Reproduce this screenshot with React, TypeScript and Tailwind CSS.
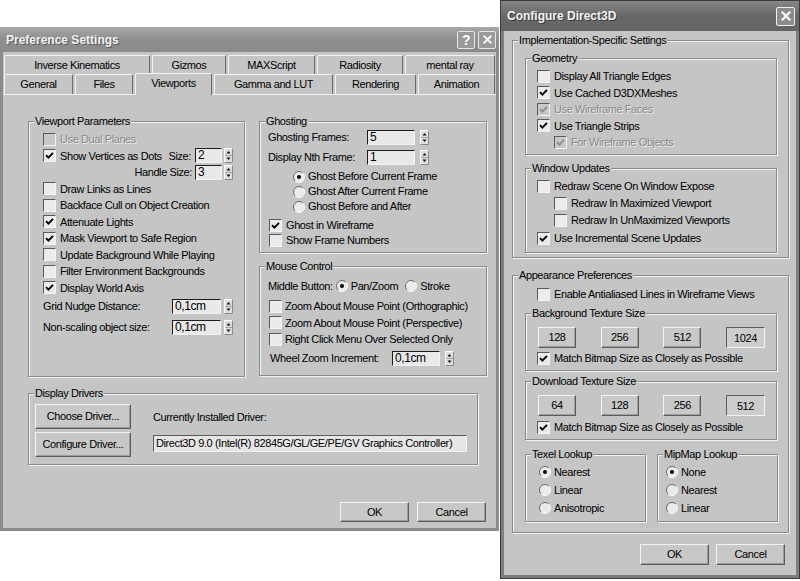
import React from "react";

const BG = "bg-[#c5c5c5]";

function Check({ on = false, dis = false }: { on?: boolean; dis?: boolean }) {
  return (
    <span
      className={
        "flex h-[13px] w-[13px] shrink-0 items-center justify-center border border-b-[#f4f4f4] border-l-[#5a5a5a] border-r-[#f4f4f4] border-t-[#5a5a5a] " +
        (dis ? "bg-[#c8c8c8]" : "bg-[#ebebeb]")
      }
    >
      {on && (
        <svg width="9" height="9" viewBox="0 0 9 9">
          <path d="M1 4.2 L3.4 6.6 L8 1.8" fill="none" stroke={dis ? "#8c8c8c" : "#000"} strokeWidth="1.9" />
        </svg>
      )}
    </span>
  );
}

function Radio({ on = false }: { on?: boolean }) {
  return (
    <svg width="12" height="12" viewBox="0 0 12 12" className="shrink-0">
      <circle cx="6" cy="6" r="5.5" fill="#ebebeb" />
      <path d="M2.1 9.9 A5.5 5.5 0 0 1 9.9 2.1" stroke="#6a6a6a" fill="none" />
      <path d="M9.9 2.1 A5.5 5.5 0 0 1 2.1 9.9" stroke="#fafafa" fill="none" />
      {on && <circle cx="6" cy="6" r="2" fill="#000" />}
    </svg>
  );
}

function Arrows() {
  return (
    <svg width="9" height="15" viewBox="0 0 9 15" className="block shrink-0">
      <rect x="0" y="0" width="9" height="15" fill="#dedede" />
      <path d="M0.5 14.5V0.5H8.5" stroke="#ffffff" fill="none" />
      <path d="M8.5 0.5V14.5H0.5" stroke="#8a8a8a" fill="none" />
      <line x1="1" y1="7.5" x2="8" y2="7.5" stroke="#a0a0a0" />
      <path d="M2.5 5.5 L4.5 3 L6.5 5.5Z" fill="#111" />
      <path d="M2.5 9.5 L4.5 12 L6.5 9.5Z" fill="#111" />
    </svg>
  );
}

function Field({ v, w }: { v: string; w: string }) {
  return (
    <div
      className={
        w +
        " h-[15px] shrink-0 border border-b-[#f2f2f2] border-l-[#1e1e1e] border-r-[#f2f2f2] border-t-[#1e1e1e] bg-[#e9e9e9] pl-[2px] text-[12px] leading-[13px]"
      }
    >
      {v}
    </div>
  );
}

function Btn({ children, cls, down = false }: { children: React.ReactNode; cls: string; down?: boolean }) {
  return (
    <div
      className={
        "flex shrink-0 items-center justify-center border " +
        (down
          ? "border-b-[#f4f4f4] border-l-[#5c5c5c] border-r-[#f4f4f4] border-t-[#5c5c5c] bg-[#cdcdcd] pt-[1px]"
          : "border-b-[#5c5c5c] border-l-[#f4f4f4] border-r-[#5c5c5c] border-t-[#f4f4f4] bg-[#c8c8c8] shadow-[inset_-1px_-1px_0_#9c9c9c]") +
        " " +
        cls
      }
    >
      {children}
    </div>
  );
}

function Group({ title, cls, children }: { title: string; cls: string; children?: React.ReactNode }) {
  return (
    <div className={"relative shrink-0 border border-[#8a8a8a] shadow-[inset_1px_1px_0_#f2f2f2,1px_1px_0_#f2f2f2] " + cls}>
      <span className={"absolute left-[5px] top-[-8px] px-[1px] leading-[14px] " + BG}>{title}</span>
      {children}
    </div>
  );
}

function CRow({
  label,
  on = false,
  dis = false,
  h = "h-[16.5px]",
  cls = "",
  gap = "gap-[4px]",
}: {
  label: string;
  on?: boolean;
  dis?: boolean;
  h?: string;
  cls?: string;
  gap?: string;
}) {
  return (
    <div className={"flex items-center " + gap + " " + h + " " + cls}>
      <Check on={on} dis={dis} />
      <span className={dis ? "text-[#8a8a8a] [text-shadow:1px_1px_0_#ececec]" : ""}>{label}</span>
    </div>
  );
}

function RRow({ label, on = false, h, cls = "" }: { label: string; on?: boolean; h: string; cls?: string }) {
  return (
    <div className={"flex items-center gap-[3px] " + h + " " + cls}>
      <Radio on={on} />
      <span>{label}</span>
    </div>
  );
}

function XGlyph({ s }: { s: number }) {
  return (
    <svg width={s} height={s} viewBox="0 0 10 10">
      <path d="M1.5 1.5 L8.5 8.5 M8.5 1.5 L1.5 8.5" stroke="#fff" strokeWidth="1.8" />
    </svg>
  );
}

function TabRow({ tabs }: { tabs: { t: string; w: string; sel?: boolean }[] }) {
  return (
    <>
      {tabs.map((tb) => (
        <div
          key={tb.t}
          className={
            "flex shrink-0 items-center justify-center rounded-t-[2px] border-l border-r border-t border-l-[#f4f4f4] border-r-[#6a6a6a] border-t-[#f4f4f4] " +
            BG +
            " " +
            tb.w +
            " " +
            (tb.sel ? "relative z-10 h-[22px] translate-y-[1px] pb-[2px]" : "h-full")
          }
        >
          {tb.t}
        </div>
      ))}
    </>
  );
}

function Spin({ v, w, gap }: { v: string; w: string; gap: string }) {
  return (
    <div className={"flex shrink-0 items-center " + gap}>
      <Field v={v} w={w} />
      <Arrows />
    </div>
  );
}

export default function App() {
  return (
    <div className="relative h-[581px] w-[800px] overflow-hidden bg-white font-['Liberation_Sans',Arial,sans-serif] text-[11px] tracking-[-0.4px] text-black">
      {/* ===== Preference Settings window ===== */}
      <div className="absolute left-0 top-[27px] flex h-[504px] w-[499px] flex-col">
        <div className="flex h-[25px] shrink-0 items-center bg-gradient-to-b from-[#a8a8a8] via-[#8e8e8e] to-[#8a8a8a] pl-[6px] pr-[3px]">
          <span className="text-[12px] font-bold tracking-normal text-[#f2f2f2] [text-shadow:1px_1px_0_#5a5a5a]">
            Preference Settings
          </span>
          <div className="ml-auto flex gap-[3px]">
            <div className="flex h-[18px] w-[18px] items-center justify-center rounded-[2px] border border-[#e8e8e8] bg-[#9a9a9a] text-[14px] font-bold leading-none text-white">
              ?
            </div>
            <div className="flex h-[18px] w-[18px] items-center justify-center rounded-[2px] border border-[#e8e8e8] bg-[#9a9a9a]">
              <XGlyph s={11} />
            </div>
          </div>
        </div>
        <div className={"flex flex-1 flex-col border-x-[3px] border-b-[3px] border-[#8c8c8c] " + BG}>
          <div className="pl-[1px] pt-[3px]">
            <div className="flex h-[19px] gap-[2px]">
              <TabRow
                tabs={[
                  { t: "Inverse Kinematics", w: "w-[146px]" },
                  { t: "Gizmos", w: "w-[74px]" },
                  { t: "MAXScript", w: "w-[87px]" },
                  { t: "Radiosity", w: "w-[86px]" },
                  { t: "mental ray", w: "w-[90px]" },
                ]}
              />
            </div>
            <div className="flex h-[20px] items-end gap-[2px]">
              <TabRow
                tabs={[
                  { t: "General", w: "w-[69px]" },
                  { t: "Files", w: "w-[58px]" },
                  { t: "Viewports", w: "w-[77px]", sel: true },
                  { t: "Gamma and LUT", w: "w-[119px]" },
                  { t: "Rendering", w: "w-[81px]" },
                  { t: "Animation", w: "w-[77px]" },
                ]}
              />
            </div>
          </div>
          <div className="flex flex-1 flex-col border-t border-t-[#f4f4f4] pl-[25px] pr-[10px] pt-[26px]">
            <div className="flex items-start gap-[14px]">
              <Group title="Viewport Parameters" cls="h-[256px] w-[217px]">
                <div className="flex flex-col pl-[14px] pr-[11px] pt-[9px]">
                  <CRow label="Use Dual Planes" dis />
                  <div className="flex h-[16.5px] items-center gap-[4px]">
                    <Check on />
                    <span>Show Vertices as Dots</span>
                    <span className="ml-auto">Size:</span>
                    <Spin v="2" w="w-[27px]" gap="gap-[2px]" />
                  </div>
                  <div className="flex h-[16.5px] items-center justify-end gap-[3px]">
                    <span>Handle Size:</span>
                    <Spin v="3" w="w-[27px]" gap="gap-[2px]" />
                  </div>
                  <CRow label="Draw Links as Lines" />
                  <CRow label="Backface Cull on Object Creation" />
                  <CRow label="Attenuate Lights" on />
                  <CRow label="Mask Viewport to Safe Region" on />
                  <CRow label="Update Background While Playing" />
                  <CRow label="Filter Environment Backgrounds" />
                  <CRow label="Display World Axis" on />
                  <div className="flex h-[20px] items-center">
                    <span>Grid Nudge Distance:</span>
                    <div className="ml-auto">
                      <Spin v="0,1cm" w="w-[49px]" gap="gap-[3px]" />
                    </div>
                  </div>
                  <div className="mt-[1px] flex h-[20px] items-center">
                    <span>Non-scaling object size:</span>
                    <div className="ml-auto">
                      <Spin v="0,1cm" w="w-[49px]" gap="gap-[3px]" />
                    </div>
                  </div>
                </div>
              </Group>
              <div className="flex w-[228px] flex-col gap-[13px]">
                <Group title="Ghosting" cls="h-[132px] w-[228px]">
                  <div className="flex flex-col pl-[8px] pt-[5px]">
                    <div className="flex h-[20px] items-center">
                      <span className="w-[99px]">Ghosting Frames:</span>
                      <Spin v="5" w="w-[48px]" gap="gap-[5px]" />
                    </div>
                    <div className="flex h-[20px] items-center">
                      <span className="w-[99px]">Display Nth Frame:</span>
                      <Spin v="1" w="w-[48px]" gap="gap-[5px]" />
                    </div>
                    <div className="ml-[25px] mt-[2px] flex flex-col">
                      <RRow label="Ghost Before Current Frame" on h="h-[15px]" />
                      <RRow label="Ghost After Current Frame" h="h-[15px]" />
                      <RRow label="Ghost Before and After" h="h-[15px]" />
                    </div>
                    <CRow label="Ghost in Wireframe" on h="h-[16px]" cls="ml-[1px] mt-[3px]" />
                    <CRow label="Show Frame Numbers" h="h-[15px]" cls="ml-[1px]" />
                  </div>
                </Group>
                <Group title="Mouse Control" cls="h-[110px] w-[228px]">
                  <div className="flex flex-col pl-[8px] pt-[11px]">
                    <div className="flex h-[16px] items-center">
                      <span>Middle Button:</span>
                      <span className="ml-[3px]">
                        <Radio on />
                      </span>
                      <span className="ml-[3px]">Pan/Zoom</span>
                      <span className="ml-[7px]">
                        <Radio />
                      </span>
                      <span className="ml-[3px]">Stroke</span>
                    </div>
                    <CRow label="Zoom About Mouse Point (Orthographic)" gap="gap-[3px]" cls="ml-[1px] mt-[4px]" />
                    <CRow label="Zoom About Mouse Point (Perspective)" gap="gap-[3px]" cls="ml-[1px]" />
                    <CRow label="Right Click Menu Over Selected Only" gap="gap-[3px]" cls="ml-[1px]" />
                    <div className="ml-[2px] mt-[1.5px] flex h-[18px] items-center">
                      <span className="w-[122px]">Wheel Zoom Increment:</span>
                      <Spin v="0,1cm" w="w-[48px]" gap="gap-[5px]" />
                    </div>
                  </div>
                </Group>
              </div>
            </div>
            <Group title="Display Drivers" cls="mt-[16px] h-[72px] w-[450px]">
              <div className="flex pl-[6px] pt-[10px]">
                <div className="flex flex-col gap-[3px]">
                  <Btn cls="h-[25px] w-[96px]">Choose Driver...</Btn>
                  <Btn cls="h-[25px] w-[96px]">Configure Driver...</Btn>
                </div>
                <div className="ml-[22px] flex flex-col">
                  <div className="flex h-[25px] items-center pt-[2px]">Currently Installed Driver:</div>
                  <div className="mt-[6px] flex h-[17px] w-[314px] items-center border border-b-[#f2f2f2] border-l-[#5a5a5a] border-r-[#f2f2f2] border-t-[#5a5a5a] bg-[#e6e6e6] pl-[2px]">
                    Direct3D 9.0 (Intel(R) 82845G/GL/GE/PE/GV Graphics Controller)
                  </div>
                </div>
              </div>
            </Group>
            <div className="mt-[37px] flex justify-end gap-[8px]">
              <Btn cls="h-[20px] w-[69px]">OK</Btn>
              <Btn cls="h-[20px] w-[69px]">Cancel</Btn>
            </div>
          </div>
        </div>
      </div>

      {/* ===== Configure Direct3D window ===== */}
      <div className="absolute left-[500px] top-0 flex h-[579px] w-[300px] flex-col border border-[#3a3a3a]">
        <div className="flex h-[30px] shrink-0 items-center bg-gradient-to-b from-[#868686] via-[#686868] to-[#646464] pl-[6px] pr-[4px]">
          <span className="text-[12px] font-bold tracking-normal text-[#f4f4f4] [text-shadow:1px_1px_0_#3a3a3a]">
            Configure Direct3D
          </span>
          <div className="ml-auto flex h-[19px] w-[19px] items-center justify-center rounded-[2px] border border-[#f0f0f0] bg-[#8c8c8c]">
            <XGlyph s={12} />
          </div>
        </div>
        <div className={"flex flex-1 flex-col border-x-[3px] border-b-[3px] border-[#7e7e7e] pl-[8px] pt-[9px] " + BG}>
          <Group title="Implementation-Specific Settings" cls="h-[218px] w-[277px]">
            <div className="flex flex-col pl-[12px] pt-[17px]">
              <Group title="Geometry" cls="h-[97px] w-[252px]">
                <div className="flex flex-col pl-[11px] pt-[9px]">
                  <CRow label="Display All Triangle Edges" />
                  <CRow label="Use Cached D3DXMeshes" on />
                  <CRow label="Use Wireframe Faces" on dis />
                  <CRow label="Use Triangle Strips" on />
                  <CRow label="For Wireframe Objects" on dis cls="ml-[17px]" />
                </div>
              </Group>
              <Group title="Window Updates" cls="mt-[13px] h-[85px] w-[252px]">
                <div className="flex flex-col pl-[11px] pt-[9px]">
                  <CRow label="Redraw Scene On Window Expose" h="h-[17px]" />
                  <CRow label="Redraw In Maximized Viewport" h="h-[17px]" cls="ml-[17px]" />
                  <CRow label="Redraw In UnMaximized Viewports" h="h-[17px]" cls="ml-[17px]" />
                  <CRow label="Use Incremental Scene Updates" on h="h-[17px]" cls="mt-[1px]" />
                </div>
              </Group>
            </div>
          </Group>
          <Group title="Appearance Preferences" cls="mt-[17px] h-[258px] w-[277px]">
            <div className="flex flex-col pl-[12px] pt-[10px]">
              <CRow label="Enable Antialiased Lines in Wireframe Views" h="h-[16px]" cls="ml-[12px]" />
              <Group title="Background Texture Size" cls="mt-[11px] h-[58px] w-[252px]">
                <div className="flex flex-col pt-[13px]">
                  <div className="flex justify-between pl-[12px] pr-[11px]">
                    <Btn cls="h-[21px] w-[38px]">128</Btn>
                    <Btn cls="h-[21px] w-[38px]">256</Btn>
                    <Btn cls="h-[21px] w-[38px]">512</Btn>
                    <Btn cls="h-[21px] w-[39px]" down>
                      1024
                    </Btn>
                  </div>
                  <CRow label="Match Bitmap Size as Closely as Possible" on h="h-[16px]" cls="ml-[11px] mt-[2px]" />
                </div>
              </Group>
              <Group title="Download Texture Size" cls="mt-[10px] h-[59px] w-[252px]">
                <div className="flex flex-col pt-[13px]">
                  <div className="flex justify-between pl-[12px] pr-[11px]">
                    <Btn cls="h-[21px] w-[38px]">64</Btn>
                    <Btn cls="h-[21px] w-[38px]">128</Btn>
                    <Btn cls="h-[21px] w-[38px]">256</Btn>
                    <Btn cls="h-[21px] w-[39px]" down>
                      512
                    </Btn>
                  </div>
                  <CRow label="Match Bitmap Size as Closely as Possible" on h="h-[16px]" cls="ml-[11px] mt-[3px]" />
                </div>
              </Group>
              <div className="mt-[14px] flex gap-[11px]">
                <Group title="Texel Lookup" cls="h-[68px] w-[121px]">
                  <div className="flex flex-col pl-[13px] pt-[8px]">
                    <RRow label="Nearest" on h="h-[18px]" />
                    <RRow label="Linear" h="h-[18px]" />
                    <RRow label="Anisotropic" h="h-[18px]" />
                  </div>
                </Group>
                <Group title="MipMap Lookup" cls="h-[68px] w-[121px]">
                  <div className="flex flex-col pl-[8px] pt-[8px]">
                    <RRow label="None" on h="h-[18px]" />
                    <RRow label="Nearest" h="h-[18px]" />
                    <RRow label="Linear" h="h-[18px]" />
                  </div>
                </Group>
              </div>
            </div>
          </Group>
          <div className="mt-[11px] flex justify-end gap-[7px] pr-[11px]">
            <Btn cls="h-[21px] w-[69px]">OK</Btn>
            <Btn cls="h-[21px] w-[69px]">Cancel</Btn>
          </div>
        </div>
      </div>
    </div>
  );
}
